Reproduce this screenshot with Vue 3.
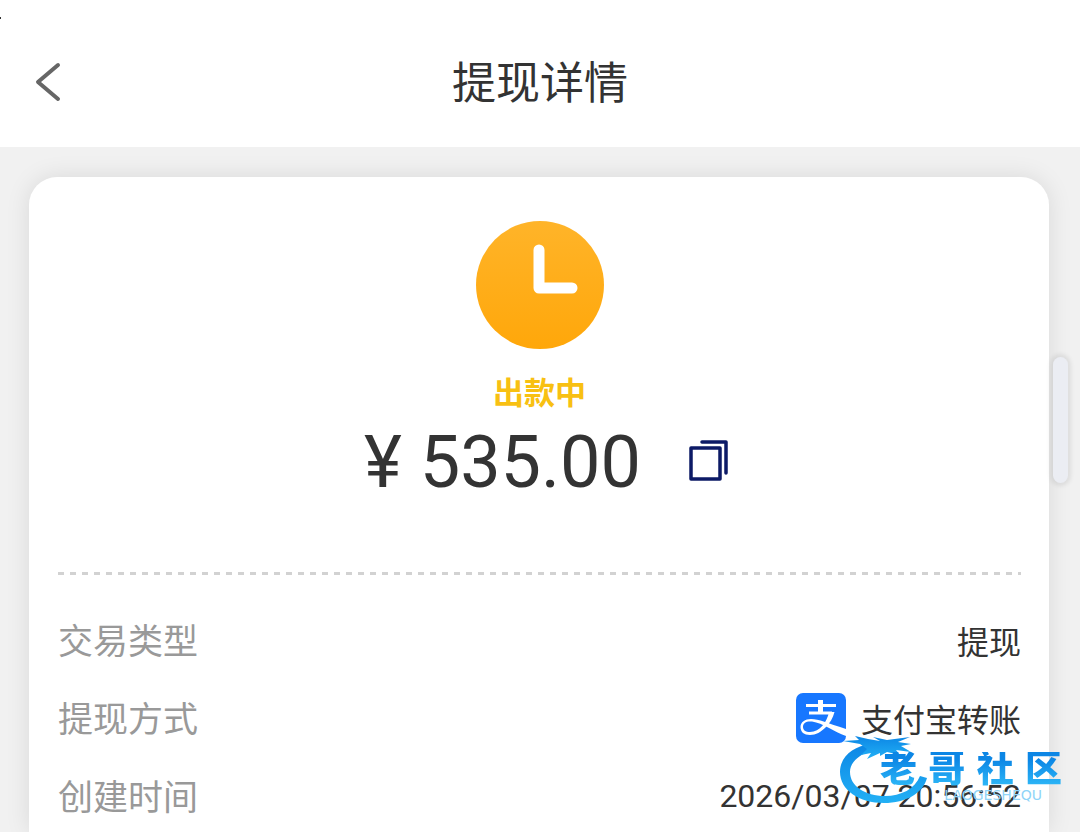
<script setup>
const status = '出款中'
const amount = '535.00'
const brand = ['老', '哥', '社', '区']
const rows = [
  { label: '交易类型', value: '提现' },
  { label: '提现方式', value: '支付宝转账', alipay: true },
  { label: '创建时间', value: '2026/03/07 20:56:52' },
]
</script>

<template>
  <div class="page">
    <header class="topbar">
      <button class="back" type="button" aria-label="返回">
        <svg width="28" height="42" viewBox="0 0 28 42" fill="none">
          <path d="M24 3 4 20 24 37" stroke="#666" stroke-width="4" stroke-linecap="round" stroke-linejoin="round" />
        </svg>
      </button>
      <h1>提现详情</h1>
    </header>

    <main>
      <section class="card">
        <svg class="clock" width="128" height="128" viewBox="0 0 128 128" fill="none">
          <defs>
            <linearGradient id="clockFill" x1="0" y1="0" x2="0" y2="1">
              <stop offset="0" stop-color="#ffb429" />
              <stop offset="1" stop-color="#ffa70a" />
            </linearGradient>
          </defs>
          <circle cx="64" cy="64" r="64" fill="url(#clockFill)" />
          <path d="M63 29V67H96" stroke="#fff" stroke-width="11" stroke-linecap="round" stroke-linejoin="round" />
        </svg>
        <p class="status">{{ status }}</p>
        <div class="amount">
          <span>¥ {{ amount }}</span>
          <button class="copy" type="button" aria-label="复制">
            <svg width="40" height="42" viewBox="0 0 40 42" fill="none" stroke="#0c1a66" stroke-linejoin="round" stroke-linecap="round">
              <rect x="2" y="8" width="29" height="31" stroke-width="3.500" />
              <path d="M13 2H37V33" stroke-width="3.500" />
            </svg>
          </button>
        </div>

        <svg class="divider" height="3" aria-hidden="true">
          <line x1="0" y1="1.5" x2="100%" y2="1.5" stroke="#d2d2d2" stroke-width="3" stroke-dasharray="6 6" />
        </svg>

        <dl class="details">
          <div v-for="row in rows" :key="row.label" class="row">
            <dt>{{ row.label }}</dt>
            <dd>
              <svg v-if="row.alipay" width="50" height="50" viewBox="0 0 50 50" fill="none">
                <rect width="50" height="50" rx="7" fill="#1777ff" />
                <path d="M22 7H27V20H22Z" fill="#fff" />
                <path d="M10 12.5H40M13 20H36" stroke="#fff" stroke-width="3" />
                <path d="M33 19H38.500C37 25 34 30 30 34C25 39 20 42 14 42C8 42 4.500 39 4.500 34C4.500 29 9 26 15 26C23 26 31 30 50 36V43C38 39 27 30 16 28.500C10 28 7 30 7 34C7 37 9.500 39 14 39C24 39 31 29 33 19Z" fill="#fff" />
              </svg>
              <span>{{ row.value }}</span>
            </dd>
          </div>
        </dl>
      </section>
    </main>

    <div class="scroll-thumb"></div>
    <div class="edge-mark"></div>

    <div class="watermark">
      <svg width="90" height="74" viewBox="0 0 90 74">
        <defs>
          <linearGradient id="ringFill" x1="0" y1="0" x2="0" y2="1">
            <stop offset="0" stop-color="#0c86e5" />
            <stop offset="1" stop-color="#22b0f5" />
          </linearGradient>
        </defs>
        <g fill="url(#ringFill)">
          <path d="M31 12C13 14 0 25 0 40C0 58 19 71 44 71C66 71 83 61 87 46L80 44C75 57 61 64 45 64C25 64 10 54 10 40C10 31 18 23 31 19L48 12Z" />
          <path d="M3 9 19 8 15 4 28 7 40 9 33 5 47 8 70 5 58 10 71 12 61 14 71 20 56 18 60 23 47 20 40 24 40 21 27 27 31 21 21 23 27 17 20 12Z" />
        </g>
      </svg>
      <div class="wordmark">
        <strong><span v-for="glyph in brand" :key="glyph">{{ glyph }}</span></strong>
        <small>LAOGESHEQU</small>
      </div>
    </div>
  </div>
</template>

<style>
body {
  margin: 0;
  background: #f1f1f1;
}
</style>

<style scoped>
.page {
  display: flex;
  flex-direction: column;
  min-height: 100vh;
  position: relative;
  overflow: hidden;
  color: #333;
  font-family: Roboto, "Noto Sans CJK SC", sans-serif;
}
.topbar {
  display: grid;
  grid-template-columns: 48px 1fr 48px;
  align-items: center;
  padding: 52px 34px 33px;
  background: #fff;
}
h1 {
  margin: 0;
  padding-top: 2px;
  font-size: 44px;
  font-weight: 400;
  line-height: 60px;
  text-align: center;
}
button {
  display: flex;
  padding: 0;
  border: 0;
  background: none;
}
main {
  display: flex;
  flex: 1;
  padding: 30px 31px 0 29px;
}
.card {
  display: flex;
  flex: 1;
  flex-direction: column;
  align-items: center;
  padding: 44px 28px 10px 29px;
  border-radius: 28px 28px 0 0;
  background: #fff;
  box-shadow: 0 0 24px rgba(0, 0, 0, 0.1);
}
.status {
  margin: 25px 0 0;
  color: #f8c012;
  font-size: 31px;
  font-weight: 700;
  line-height: 40px;
}
.amount {
  display: flex;
  align-items: center;
  gap: 48px;
  padding-left: 14px;
  margin-top: 4px;
  font-size: 72px;
  line-height: 90px;
}
.copy {
  padding-bottom: 4px;
}
.divider {
  display: block;
  width: 100%;
  margin-top: 64px;
}
.details {
  display: flex;
  flex-direction: column;
  gap: 28px;
  width: 100%;
  margin: 40px 0 0;
}
.row {
  display: flex;
  align-items: center;
  justify-content: space-between;
  height: 50px;
}
dt {
  padding-bottom: 4px;
  color: #999;
  font-size: 35px;
}
dd {
  display: flex;
  align-items: center;
  gap: 15px;
  margin: 0;
  font-size: 32px;
}
.scroll-thumb {
  position: absolute;
  top: 357px;
  right: 12px;
  width: 15px;
  height: 126px;
  border-radius: 8px;
  background: #ebedf3;
  box-shadow: 0 0 4px 3px rgba(0, 0, 0, 0.08);
}
.edge-mark {
  position: absolute;
  top: 17px;
  left: 0;
  width: 1px;
  height: 2px;
  background: #333;
}
.watermark {
  position: absolute;
  right: 18px;
  bottom: 26px;
  width: 222px;
  height: 74px;
  pointer-events: none;
}
.watermark svg {
  display: block;
}
.wordmark {
  position: absolute;
  top: 20px;
  right: 0;
  display: flex;
  flex-direction: column;
  align-items: flex-end;
  width: 182px;
}
.wordmark strong {
  display: flex;
  justify-content: space-between;
  width: 100%;
  background: linear-gradient(#0c86e5 20%, #2bb4f6 90%);
  background-clip: text;
  color: transparent;
  font-size: 37px;
  font-weight: 900;
  line-height: 36px;
}
.wordmark small {
  padding-right: 20px;
  color: #8fd4f8;
  font-family: "DejaVu Sans", sans-serif;
  font-size: 14px;
  line-height: 14px;
}
</style>
